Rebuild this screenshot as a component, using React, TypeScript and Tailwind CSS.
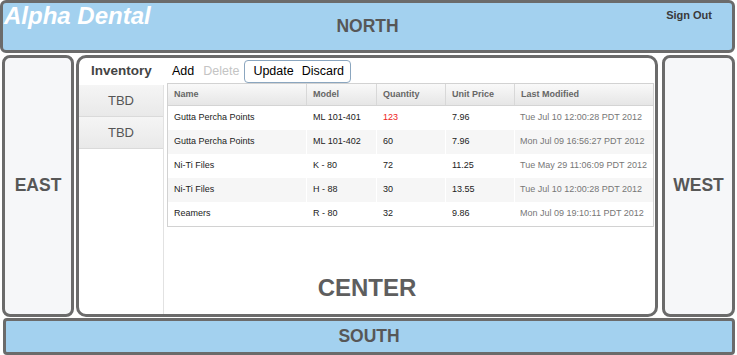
import { ReactNode } from 'react'

type Item = {
  name: string
  model: string
  qty: string
  price: string
  modified: string
  low?: boolean
}

const items: Item[] = [
  { name: 'Gutta Percha Points', model: 'ML 101-401', qty: '123', price: '7.96', modified: 'Tue Jul 10 12:00:28 PDT 2012', low: true },
  { name: 'Gutta Percha Points', model: 'ML 101-402', qty: '60', price: '7.96', modified: 'Mon Jul 09 16:56:27 PDT 2012' },
  { name: 'Ni-Ti Files', model: 'K - 80', qty: '72', price: '11.25', modified: 'Tue May 29 11:06:09 PDT 2012' },
  { name: 'Ni-Ti Files', model: 'H - 88', qty: '30', price: '13.55', modified: 'Tue Jul 10 12:00:28 PDT 2012' },
  { name: 'Reamers', model: 'R - 80', qty: '32', price: '9.86', modified: 'Mon Jul 09 19:10:11 PDT 2012' },
]

const cols = 'grid grid-cols-[139px_70px_69px_69px_1fr]'

function Panel({ className, children }: { className: string; children?: ReactNode }) {
  return (
    <div className={`border-[3px] border-[#6b6b6b] ${className}`}>{children}</div>
  )
}

function RegionLabel({ text }: { text: string }) {
  return <span className="text-[17.5px] font-bold text-[#575757] leading-none">{text}</span>
}

function InventoryTable() {
  return (
    <div className="w-[487px] border border-[#d2d2d2] text-[9px]">
      <div className={`${cols} h-[22px] bg-linear-to-b from-[#f9f9f9] to-[#e6e6e6] border-b border-[#d4d4d4] font-bold text-[#666]`}>
        {['Name', 'Model', 'Quantity', 'Unit Price', 'Last Modified'].map((h, i) => (
          <div key={h} className={`flex items-center pl-[6px] ${i < 4 ? 'border-r border-[#d8d8d8]' : ''}`}>
            {h}
          </div>
        ))}
      </div>
      {items.map((it, i) => (
        <div key={i} className={`${cols} h-[24px] ${i % 2 === 1 ? 'bg-[#f6f6f6]' : 'bg-white'} text-[#222]`}>
          <div className="flex items-center pl-[6px] border-r border-white">{it.name}</div>
          <div className="flex items-center pl-[6px] border-r border-white">{it.model}</div>
          <div className={`flex items-center pl-[6px] border-r border-white ${it.low ? 'text-[#ee2222]' : ''}`}>{it.qty}</div>
          <div className="flex items-center pl-[6px] border-r border-white">{it.price}</div>
          <div className="flex items-center pl-[5px] text-[#777]">{it.modified}</div>
        </div>
      ))}
    </div>
  )
}

export default function App() {
  return (
    <div className="w-[737px] h-[355px] flex flex-col bg-white font-['Liberation_Sans',Arial,sans-serif] overflow-hidden">
      {/* north */}
      <Panel className="h-[53px] w-[735px] rounded-[6px] bg-[#a3d1ef] grid grid-cols-[1fr_auto_1fr]">
        <div className="self-start pl-[1px] pt-[1px]">
          <span className="text-[24px] font-bold italic text-white leading-none">Alpha Dental</span>
        </div>
        <div className="self-center">
          <RegionLabel text="NORTH" />
        </div>
        <div className="self-start justify-self-end pr-[20px] pt-[3px] leading-none">
          <span className="text-[11px] font-bold text-[#3a3a3a] leading-none">Sign Out</span>
        </div>
      </Panel>

      <div className="mt-[2px] h-[262px] flex pl-[2px]">
        {/* east */}
        <Panel className="w-[72px] rounded-[8px] bg-[#f6f7f9] flex items-center justify-center">
          <RegionLabel text="EAST" />
        </Panel>

        {/* center */}
        <Panel className="relative ml-[2px] w-[582px] rounded-[10px] bg-white flex">
          <div className="w-[85px] flex flex-col">
            <div className="h-[27px] flex items-center justify-center text-[13.5px] font-bold text-[#444]">
              Inventory
            </div>
            <div className="flex-1 border-r border-[#e2e2e2] flex flex-col">
              {['TBD', 'TBD'].map((t, i) => (
                <div
                  key={i}
                  className="h-[32px] border-b border-[#dadada] bg-linear-to-b from-[#f5f5f5] to-[#e9e9e9] flex items-center justify-center text-[13px] text-[#555]"
                >
                  {t}
                </div>
              ))}
            </div>
          </div>

          <div className="pl-[3px] flex flex-col">
            <div className="h-[25px] flex items-center text-[12.5px] pt-[1px]">
              <button className="ml-[5px] text-black">Add</button>
              <button className="ml-[9px] text-[#c4c4c4]">Delete</button>
              <div className="ml-[5px] h-[23px] border border-[#8ba6bf] rounded-[4px] flex items-center pl-[8px] pr-[6px]">
                <button className="text-black">Update</button>
                <button className="ml-[8px] text-black">Discard</button>
              </div>
            </div>
            <InventoryTable />
          </div>

          <div className="absolute left-0 right-0 bottom-[14px] flex justify-center">
            <span className="text-[24px] font-bold text-[#5e5e5e] leading-none">CENTER</span>
          </div>
        </Panel>

        {/* west */}
        <Panel className="ml-[4px] w-[73px] rounded-[8px] bg-[#f6f7f9] flex items-center justify-center">
          <RegionLabel text="WEST" />
        </Panel>
      </div>

      {/* south */}
      <Panel className="mt-[1px] ml-[3px] h-[37px] w-[732px] rounded-[4px] bg-[#a3d1ef] flex items-center justify-center">
        <RegionLabel text="SOUTH" />
      </Panel>
    </div>
  )
}
